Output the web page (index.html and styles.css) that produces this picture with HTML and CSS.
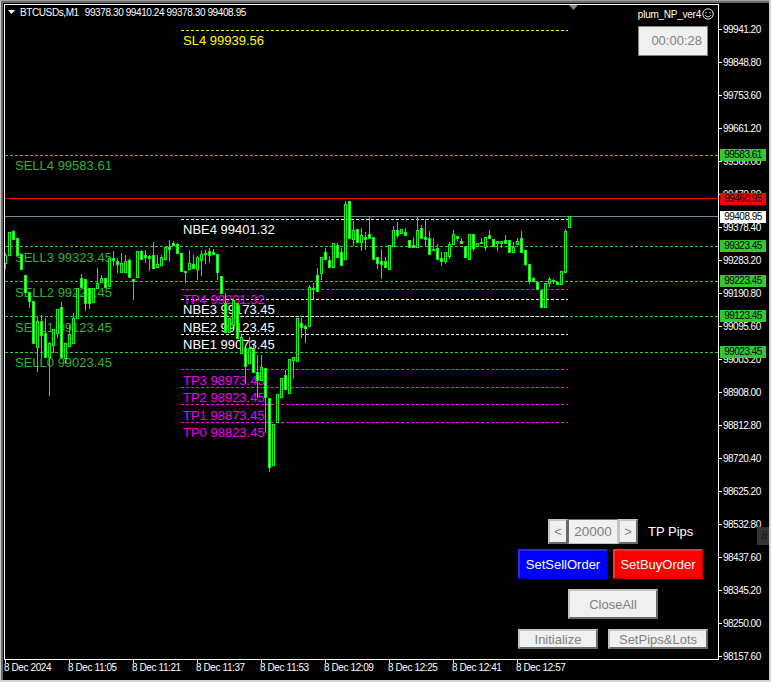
FILE: index.html
```html
<!DOCTYPE html>
<html lang="en">
<head>
<meta charset="utf-8">
<title>BTCUSDs,M1</title>
<link rel="stylesheet" href="styles.css">
</head>
<body>
<div class="window">
  <div class="terminal">
    <div class="upper">
      <main class="plot">
        <svg class="layer levels" viewBox="5 5 713 654" width="713" height="654" aria-hidden="true">
          <g class="dash">
            <line class="yellow" x1="181" x2="568" y1="30.5" y2="30.5"/>
            <line class="green" x1="5" x2="718" y1="155.5" y2="155.5"/>
            <line class="green" x1="5" x2="718" y1="246.5" y2="246.5"/>
            <line class="green" x1="5" x2="718" y1="281.5" y2="281.5"/>
            <line class="green" x1="5" x2="718" y1="316.5" y2="316.5"/>
            <line class="green" x1="5" x2="718" y1="352.5" y2="352.5"/>
            <line class="white" x1="181" x2="568" y1="219.5" y2="219.5"/>
            <line class="white" x1="181" x2="568" y1="299.5" y2="299.5"/>
            <line class="white" x1="181" x2="568" y1="316.5" y2="316.5"/>
            <line class="white" x1="181" x2="568" y1="334.5" y2="334.5"/>
            <line class="magenta" x1="181" x2="568" y1="289.5" y2="289.5"/>
            <line class="magenta" x1="181" x2="568" y1="369.5" y2="369.5"/>
            <line class="magenta" x1="181" x2="568" y1="387.5" y2="387.5"/>
            <line class="magenta" x1="181" x2="568" y1="404.5" y2="404.5"/>
            <line class="magenta" x1="181" x2="568" y1="422.5" y2="422.5"/>
          </g>
          <line class="solid-red" x1="5" x2="718" y1="198.5" y2="198.5"/>
          <line class="solid-slate" x1="5" x2="718" y1="216.5" y2="216.5"/>
        </svg>

        <span class="label sl sl4">SL4 99939.56</span>
        <span class="label sell sell4">SELL4 99583.61</span>
        <span class="label sell sell3">SELL3 99323.45</span>
        <span class="label sell sell2">SELL2 99223.45</span>
        <span class="label sell sell1">SELL1 99123.45</span>
        <span class="label sell sell0">SELL0 99023.45</span>
        <span class="label nbe nbe4">NBE4 99401.32</span>
        <span class="label nbe nbe3">NBE3 99173.45</span>
        <span class="label nbe nbe2">NBE2 99123.45</span>
        <span class="label nbe nbe1">NBE1 99073.45</span>
        <span class="label tp tp4">TP4 99201.32</span>
        <span class="label tp tp3">TP3 98973.45</span>
        <span class="label tp tp2">TP2 98923.45</span>
        <span class="label tp tp1">TP1 98873.45</span>
        <span class="label tp tp0">TP0 98823.45</span>

        <svg id="candles" class="layer candles" viewBox="5 5 713 654" width="713" height="654" aria-hidden="true">
          <path id="wicks" class="c-green"/>
          <path id="fill-white" class="c-white"/>
          <path id="fill-black" class="c-black"/>
        </svg>

        <header class="title">
          <svg class="menu-arrow" viewBox="0 0 7 4" width="7" height="4" aria-hidden="true"><path d="M0 0h7L3.5 4z"/></svg>
          <span class="symbol">BTCUSDs,M1</span>
          <span>99378.30 99410.24 99378.30 99408.95</span>
        </header>

        <svg class="shift" viewBox="0 0 9 5" width="9" height="5" aria-hidden="true"><path d="M0 0h9L4.5 5z"/></svg>

        <aside class="top-right">
          <div class="ea">
            <span>plum_NP_ver4</span>
            <svg viewBox="0 0 12 12" width="12" height="12" aria-hidden="true">
              <circle cx="6" cy="6" r="5.2"/>
              <path d="M3.2 7.2c1 2.2 4.6 2.2 5.6 0"/>
              <path d="M4 4v1.3M8 4v1.3"/>
            </svg>
          </div>
          <div class="timer">00:00:28</div>
        </aside>

        <section class="panel">
          <div class="row row-pips">
            <button class="btn small">&lt;</button>
            <div class="btn edit">20000</div>
            <button class="btn small">&gt;</button>
            <span class="pips-label">TP Pips</span>
          </div>
          <div class="row row-orders">
            <button class="btn order blue">SetSellOrder</button>
            <button class="btn order red">SetBuyOrder</button>
          </div>
          <div class="row row-close">
            <button class="btn close">CloseAll</button>
          </div>
          <div class="row row-setup">
            <button class="btn init">Initialize</button>
            <button class="btn lots">SetPips&amp;Lots</button>
          </div>
        </section>
      </main>

      <div class="price-axis">
        <div class="tick">99941.20</div>
        <div class="tick">99848.80</div>
        <div class="tick">99753.60</div>
        <div class="tick">99661.20</div>
        <div class="tick">99566.00</div>
        <div class="tick">99470.80</div>
        <div class="tick">99378.40</div>
        <div class="tick">99283.20</div>
        <div class="tick">99190.80</div>
        <div class="tick">99095.60</div>
        <div class="tick">99003.20</div>
        <div class="tick">98908.00</div>
        <div class="tick">98812.80</div>
        <div class="tick">98720.40</div>
        <div class="tick">98625.20</div>
        <div class="tick">98532.80</div>
        <div class="tick">98437.60</div>
        <div class="tick">98345.20</div>
        <div class="tick">98250.00</div>
        <div class="tick">98157.60</div>

        <span class="tag tag-green t1">99583.61</span>
        <span class="tag tag-red t2">99460.95</span>
        <span class="tag tag-white t3">99408.95</span>
        <span class="tag tag-green t4">99323.45</span>
        <span class="tag tag-green t5">99223.45</span>
        <span class="tag tag-green t6">99123.45</span>
        <span class="tag tag-green t7">99023.45</span>
        <span class="edge-tab">#</span>
      </div>
    </div>

    <div class="time-axis">
      <div class="time">8 Dec 2024</div>
      <div class="time">8 Dec 11:05</div>
      <div class="time">8 Dec 11:21</div>
      <div class="time">8 Dec 11:37</div>
      <div class="time">8 Dec 11:53</div>
      <div class="time">8 Dec 12:09</div>
      <div class="time">8 Dec 12:25</div>
      <div class="time">8 Dec 12:41</div>
      <div class="time">8 Dec 12:57</div>
    </div>
  </div>
</div>
<script src="chart.js"></script>
</body>
</html>
```
FILE: styles.css
```css
* { box-sizing: border-box; }
html, body { margin: 0; padding: 0; background: #000; }
body { font-family: "Liberation Sans", Arial, sans-serif; }

.window {
  width: 771px;
  height: 682px;
  overflow: hidden;
  background: #000;
  border-top: 1px solid #a0a0a0;
  border-left: 1px solid #c8c8c8;
  border-right: 2px solid #d4d4d4;
  border-bottom: 2px solid #d4d4d4;
}
.terminal {
  height: 679px;
  background: #000;
  border-top: 2px solid #696969;
  border-left: 2px solid #696969;
  padding: 1px 0 0 1px;
  display: flex;
  flex-direction: column;
}
.upper { display: flex; height: 656px; flex: none; }

.plot {
  position: relative;
  flex: none;
  width: 715px;
  height: 656px;
  border: 1px solid #fff;
  overflow: hidden;
  background: #000;
}
.layer { position: absolute; left: 0; top: 0; display: block; }
.levels { z-index: 0; }
.candles { z-index: 2; shape-rendering: crispEdges; }
.dash line { stroke-width: 1; stroke-dasharray: 3 2; shape-rendering: crispEdges; }
.yellow { stroke: #ffff00; }
.green { stroke: #32cd32; }
.white { stroke: #fff; }
.magenta { stroke: #ff00ff; }
.solid-red { stroke: #ff0000; stroke-width: 1; shape-rendering: crispEdges; }
.solid-slate { stroke: #778899; stroke-width: 1; shape-rendering: crispEdges; }
.c-green { fill: #00ff00; }
.c-white { fill: #fff; }
.c-black { fill: #000; }

.label {
  position: absolute;
  z-index: 1;
  font-size: 13px;
  line-height: 16px;
  white-space: nowrap;
  margin-top: 1px;
}
.sl, .nbe, .tp { left: 178px; }
.sell { left: 10px; }
.sl { color: #ffff00; }
.nbe { color: #fff; }
.tp { color: #f000f0; }
.sell { color: #34b034; }
.sl4 { top: 27px; }
.sell4 { top: 152px; }
.sell3 { top: 244px; }
.sell2 { top: 279px; }
.sell1 { top: 314px; }
.sell0 { top: 349px; }
.nbe4 { top: 216px; }
.nbe3 { top: 296px; }
.nbe2 { top: 314px; }
.nbe1 { top: 331px; }
.tp4 { top: 286px; }
.tp3 { top: 367px; }
.tp2 { top: 384px; }
.tp1 { top: 402px; }
.tp0 { top: 419px; }

.title {
  position: absolute;
  z-index: 3;
  left: 3px;
  top: 1px;
  display: flex;
  align-items: center;
  height: 12px;
  color: #fff;
  font-size: 10px;
  letter-spacing: -0.4px;
  white-space: nowrap;
}
.menu-arrow { fill: #fff; margin-right: 5px; }
.symbol { margin-right: 6px; }

.shift { position: absolute; z-index: 3; left: 564px; top: 0; fill: #778899; }

.top-right {
  position: absolute;
  z-index: 3;
  right: 4px;
  top: 3px;
  width: 80px;
  display: flex;
  flex-direction: column;
  align-items: flex-end;
}
.ea {
  display: flex;
  align-items: center;
  gap: 1px;
  height: 12px;
  color: #fff;
  font-size: 10px;
  letter-spacing: -0.25px;
  white-space: nowrap;
}
.ea svg { fill: none; stroke: #fff; stroke-width: 0.9; }
.timer {
  margin: 6px 6px 0 0;
  width: 70px;
  height: 30px;
  border: 1px solid #808080;
  background-color: #f0f0f0;
  background-image: radial-gradient(circle, #dcdcdc 0.6px, transparent 0.8px);
  background-size: 11px 11px;
  color: #808080;
  font-size: 13px;
  line-height: 28px;
  text-align: right;
  padding-right: 5px;
}

.panel {
  position: absolute;
  z-index: 3;
  left: 513px;
  top: 514px;
  width: 195px;
  display: flex;
  flex-direction: column;
}
.row { display: flex; align-items: center; }
.row-pips { padding-left: 30px; height: 25px; }
.row-orders { margin-top: 5px; gap: 5px; }
.row-close { margin-top: 10px; padding-left: 50px; }
.row-setup { margin-top: 10px; gap: 10px; }

.btn {
  display: flex;
  align-items: center;
  justify-content: center;
  margin: 0;
  padding: 0;
  font-family: inherit;
  font-size: 13px;
  color: #808080;
  background-color: #f0f0f0;
  background-image: radial-gradient(circle, #dcdcdc 0.6px, transparent 0.8px);
  background-size: 11px 11px;
  border-style: solid;
  border-width: 2px;
  border-color: #c4c4c4 #696969 #696969 #c4c4c4;
  border-radius: 0;
}
.small { width: 20px; height: 25px; }
.edit { width: 50px; height: 25px; border-width: 1px; border-color: #696969 #c4c4c4 #c4c4c4 #696969; font-size: 13.5px; }
.pips-label { color: #fff; font-size: 13px; margin-left: 10px; white-space: nowrap; }
.order { width: 90px; height: 30px; color: #fff; background-image: none; }
.blue { background-color: #0000ff; border-color: #2a2aff #0000d8 #0000d8 #2a2aff; }
.red { background-color: #ff0000; border-color: #ff3030 #d80000 #d80000 #ff3030; }
.close { width: 90px; height: 30px; }
.init { width: 80px; height: 20px; }
.lots { width: 100px; height: 20px; }

.price-axis {
  position: relative;
  flex: none;
  width: 50px;
  padding-top: 9px;
  color: #fff;
  font-size: 10px;
  letter-spacing: -0.5px;
}
.tick {
  position: relative;
  height: 33px;
  line-height: 33px;
  padding-left: 4px;
  white-space: nowrap;
}
.tick::before {
  content: "";
  position: absolute;
  left: 0;
  top: 16px;
  width: 3px;
  height: 1px;
  background: #fff;
}
.tag {
  position: absolute;
  left: 1px;
  width: 46px;
  height: 12px;
  line-height: 12px;
  text-align: center;
  color: #000;
  font-size: 10px;
  white-space: nowrap;
}
.tag-green { background: #32c832; }
.tag-red { background: #ff0000; }
.tag-white { background: #fff; }
.t1 { top: 145px; }
.t2 { top: 189px; }
.t3 { top: 207px; }
.t4 { top: 236px; }
.t5 { top: 271px; }
.t6 { top: 306px; }
.t7 { top: 342px; }
.edge-tab {
  position: absolute;
  left: 38px;
  top: 523px;
  width: 14px;
  height: 18px;
  background: #333;
  color: #111;
  font-size: 12px;
  line-height: 18px;
  text-align: center;
}

.time-axis {
  display: flex;
  flex: none;
  height: 20px;
  color: #fff;
  font-size: 10px;
  letter-spacing: -0.4px;
}
.time {
  position: relative;
  flex: none;
  width: 64px;
  padding-top: 2px;
  line-height: 12px;
  white-space: nowrap;
}
.time::before {
  content: "";
  position: absolute;
  left: 1px;
  top: 0;
  width: 1px;
  height: 3px;
  background: #fff;
}
```
FILE: chart.js
```js
// Candles: type (k hollow / w filled), body top, body bottom, high, low. Pixel rows on the chart.
var data = "k 255 263 253 268,k 232 255,w 231 239 230,w 238 255,w 254 269,w 275 292,w 292 301 292 307,w 301 343,k 321 347 316 371,w 321 335 315 357,w 333 357 318 357,k 343 357 342 395,k 329 345 329 352,k 309 333 309 337,w 307 357 302 357,k 343 358 343 363,k 334 346 325 346,k 318 343 313 343,k 288 318,w 278 287 274 287,w 279 303 279 310,w 288 303 288 308,k 288 302,k 283 288 268 288,k 278 282 275 282,w 278 287,k 258 286,w 258 260 251 265,w 261 264 258 272,k 263 272 253 272,k 261 272 255 272,w 260 277 258 277,w 279 281 279 299,k 251 277,w 251 259 250 259,w 255 257 250 262,w 256 258 255 270,w 255 268 242 268,k 264 267 255 267,k 257 265 255 265,k 247 259,w 247 249 240 261,w 243 245 241 245,w 244 253 243 253,w 253 271,w 271 272 271 282,k 263 269 250 269,w 264 268 255 268,k 257 269 256 279,k 254 260 250 275,w 253 254 250 263,w 251 255 248 262,w 252 254 249 254,w 254 272 254 279,w 276 293,w 303 332 293 332,k 318 332,k 300 325,w 303 338,k 337 353 335 353,w 348 366 348 382,k 348 363 337 363,w 349 372 345 372,w 372 380 355 397,k 367 380 355 380,w 368 397 368 432,w 398 467 398 471,k 424 465,k 394 422,k 378 397,w 375 389 370 389,k 359 393,k 357 360 357 378,k 318 361,w 323 327 318 337,w 326 328 325 342,k 287 326 285 326,w 288 289 283 298,w 275 291 268 291,k 257 273 257 279,w 252 259 248 259,w 260 267 256 267,k 243 267,w 245 257 243 257,w 252 265 248 265,k 204 259 201 259,w 201 238,k 230 239 221 245,w 229 242,k 235 242 228 250,w 237 239 232 249,w 234 238 217 238,w 237 259,w 257 263 257 268,w 261 264 249 278,w 261 267 257 267,k 245 269,k 230 246 226 246,w 230 235 222 237,k 229 233,w 232 235 228 235,w 240 247,w 245 247 237 247,k 230 247 217 247,w 228 238 225 238,w 237 239 219 245,w 238 254 231 254,w 249 250 238 250,w 248 259 244 259,w 258 261 252 265,k 252 261 252 263,k 244 256 242 258,k 234 244 230 244,w 236 238 236 240,w 241 243 238 243,w 246 257,k 234 259,w 234 248 234 250,k 243 246,w 242 243 238 243,k 237 247 237 250,w 235 238 230 238,w 239 246,k 241 243 241 250,k 241 243 241 247,w 240 243 235 243,w 240 252,k 247 252 242 252,k 241 244 238 244,w 238 252 231 252,w 250 264 250 265,w 264 281 264 283,w 278 281 277 281,w 282 289,w 290 307,k 283 307,k 279 283 277 286,w 280 281 279 283,w 282 284,k 271 284,k 231 272 229 272,k 216 227";

function rect(x, y, w, h) {
  return "M" + x + " " + y + "h" + w + "v" + h + "h" + (-w) + "z";
}

var green = "", white = "", black = "";
data.split(",").forEach(function (item, i) {
  var p = item.split(" ");
  var top = +p[1], bot = +p[2];
  var high = p[3] ? +p[3] : top, low = p[4] ? +p[4] : bot;
  var x = 5 + 4 * i;
  green += rect(x, high, 1, low - high + 1);
  green += rect(x - 1, top, 3, bot - top + 1);
  if (bot - top >= 2) {
    if (p[0] === "w") white += rect(x, top + 1, 1, bot - top - 1);
    else black += rect(x, top + 1, 1, bot - top - 1);
  }
});
document.getElementById("wicks").setAttribute("d", green);
document.getElementById("fill-white").setAttribute("d", white);
document.getElementById("fill-black").setAttribute("d", black);
```
